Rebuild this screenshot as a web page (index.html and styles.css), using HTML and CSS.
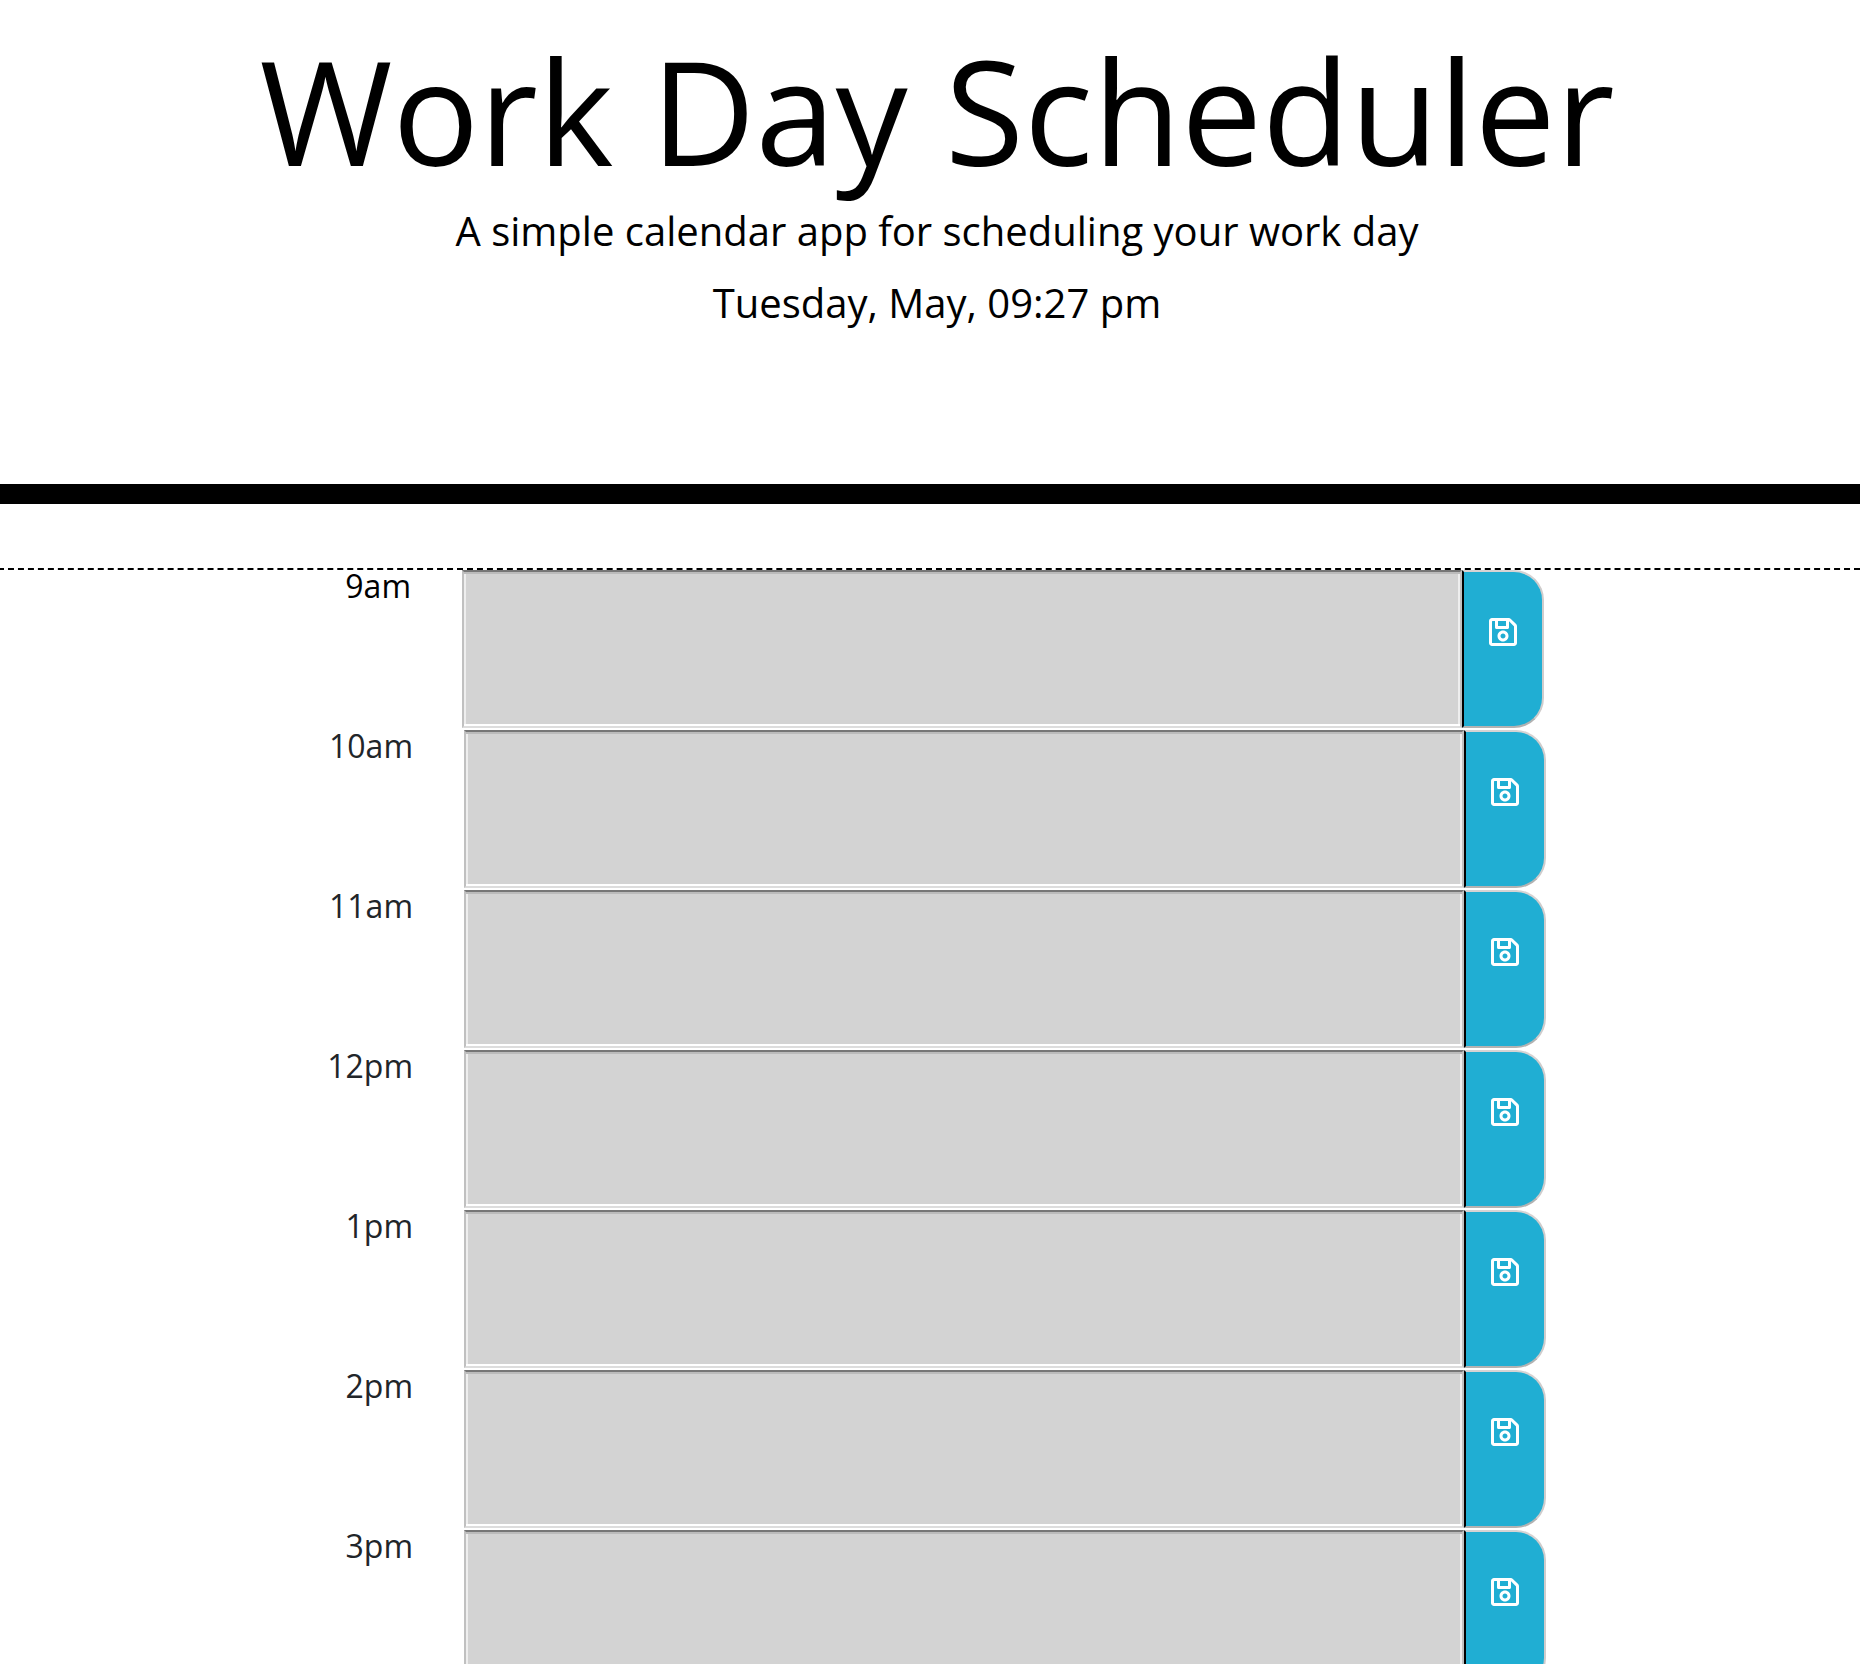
FILE: index.html
```html
<!DOCTYPE html>
<html lang="en">
<head>
  <meta charset="utf-8">
  <meta name="viewport" content="width=device-width, initial-scale=1">
  <title>Work Day Scheduler</title>
  <link rel="stylesheet" href="styles.css">
</head>
<body>
  <svg class="sprite" aria-hidden="true">
    <symbol id="save" viewBox="0 0 448 512">
      <path fill="currentColor" d="M433.941 129.941l-83.882-83.882A48 48 0 0 0 316.118 32H48C21.49 32 0 53.49 0 80v352c0 26.51 21.49 48 48 48h352c26.51 0 48-21.49 48-48V163.882a48 48 0 0 0-14.059-33.941zM272 80v80H144V80h128zm122 352H54a6 6 0 0 1-6-6V86a6 6 0 0 1 6-6h42v104c0 13.255 10.745 24 24 24h176c13.255 0 24-10.745 24-24V83.882l78.243 78.243a6 6 0 0 1 1.757 4.243V426a6 6 0 0 1-6 6zM224 232c-48.523 0-88 39.477-88 88s39.477 88 88 88 88-39.477 88-88-39.477-88-88-88zm0 128c-22.056 0-40-17.944-40-40s17.944-40 40-40 40 17.944 40 40-17.944 40-40 40z"/>
    </symbol>
  </svg>

  <header class="banner">
    <h1 class="title">Work Day Scheduler</h1>
    <p class="lead">A simple calendar app for scheduling your work day</p>
    <p class="lead">Tuesday, May, 09:27 pm</p>
  </header>

  <main class="schedule">
    <form class="time-block time-block-first">
      <label class="hour" for="hour-9">9am</label>
      <textarea class="entry" id="hour-9"></textarea>
      <button class="save-btn" type="button" aria-label="Save 9am"><svg class="save-icon"><use href="#save"/></svg></button>
    </form>
    <form class="time-block">
      <label class="hour" for="hour-10">10am</label>
      <textarea class="entry" id="hour-10"></textarea>
      <button class="save-btn" type="button" aria-label="Save 10am"><svg class="save-icon"><use href="#save"/></svg></button>
    </form>
    <form class="time-block">
      <label class="hour" for="hour-11">11am</label>
      <textarea class="entry" id="hour-11"></textarea>
      <button class="save-btn" type="button" aria-label="Save 11am"><svg class="save-icon"><use href="#save"/></svg></button>
    </form>
    <form class="time-block">
      <label class="hour" for="hour-12">12pm</label>
      <textarea class="entry" id="hour-12"></textarea>
      <button class="save-btn" type="button" aria-label="Save 12pm"><svg class="save-icon"><use href="#save"/></svg></button>
    </form>
    <form class="time-block">
      <label class="hour" for="hour-13">1pm</label>
      <textarea class="entry" id="hour-13"></textarea>
      <button class="save-btn" type="button" aria-label="Save 1pm"><svg class="save-icon"><use href="#save"/></svg></button>
    </form>
    <form class="time-block">
      <label class="hour" for="hour-14">2pm</label>
      <textarea class="entry" id="hour-14"></textarea>
      <button class="save-btn" type="button" aria-label="Save 2pm"><svg class="save-icon"><use href="#save"/></svg></button>
    </form>
    <form class="time-block">
      <label class="hour" for="hour-15">3pm</label>
      <textarea class="entry" id="hour-15"></textarea>
      <button class="save-btn" type="button" aria-label="Save 3pm"><svg class="save-icon"><use href="#save"/></svg></button>
    </form>
  </main>
</body>
</html>
```

FILE: styles.css
```css
* {
  box-sizing: border-box;
}

body {
  margin: 0;
  overflow-x: hidden;
  background: #fff;
  color: #212529;
  font-family: "Open Sans", sans-serif;
  font-size: 32px;
  line-height: 32px;
}

.sprite {
  display: none;
}

.banner {
  padding: 24px 0 151px 14px;
  border-bottom: 20px solid #000;
  color: #000;
  text-align: center;
}

.title {
  margin: 0 0 5px;
  font-size: 144px;
  font-weight: 400;
  line-height: 172px;
}

.lead {
  margin: 0 0 12px;
  font-size: 40px;
  line-height: 60px;
}

.lead:last-child {
  margin-bottom: 0;
}

.schedule {
  padding-top: 64px;
}

.time-block {
  display: grid;
  grid-template-columns: 464fr 1000fr 82px 314fr;
  border-top: 2px solid #fff;
}

.time-block-first {
  margin-left: -2px;
  padding-right: 2px;
  border-top: 2px dashed #000;
}

.hour {
  padding-right: 51px;
  text-align: right;
}

.time-block-first .hour {
  color: #000;
}

/* Two-tone sunken frame: outer border plus an inner ring of the same width */
.entry {
  display: block;
  width: 100%;
  height: 158px;
  margin: 0;
  padding: 8px;
  border: 2px solid;
  border-color: #767676 #c0c0c0 #ddd;
  border-radius: 0;
  outline: none;
  background: #d3d3d3;
  box-shadow: inset 0 2px #bbb, inset 0 -2px #fff, inset 2px 0 #eee, inset -2px 0 #eee;
  color: #000;
  font: inherit;
  resize: none;
}

.save-btn {
  display: flex;
  align-items: flex-start;
  justify-content: center;
  margin: 0;
  padding: 44px 1px 0 0;
  border: 2px solid;
  border-color: #d6d3d3 #cfcccc #b2b2b2 #000;
  border-radius: 0 30px 30px 0;
  background: #20aed3;
  color: #fff;
  cursor: pointer;
}

.save-icon {
  width: 28px;
  height: 32px;
}
```
